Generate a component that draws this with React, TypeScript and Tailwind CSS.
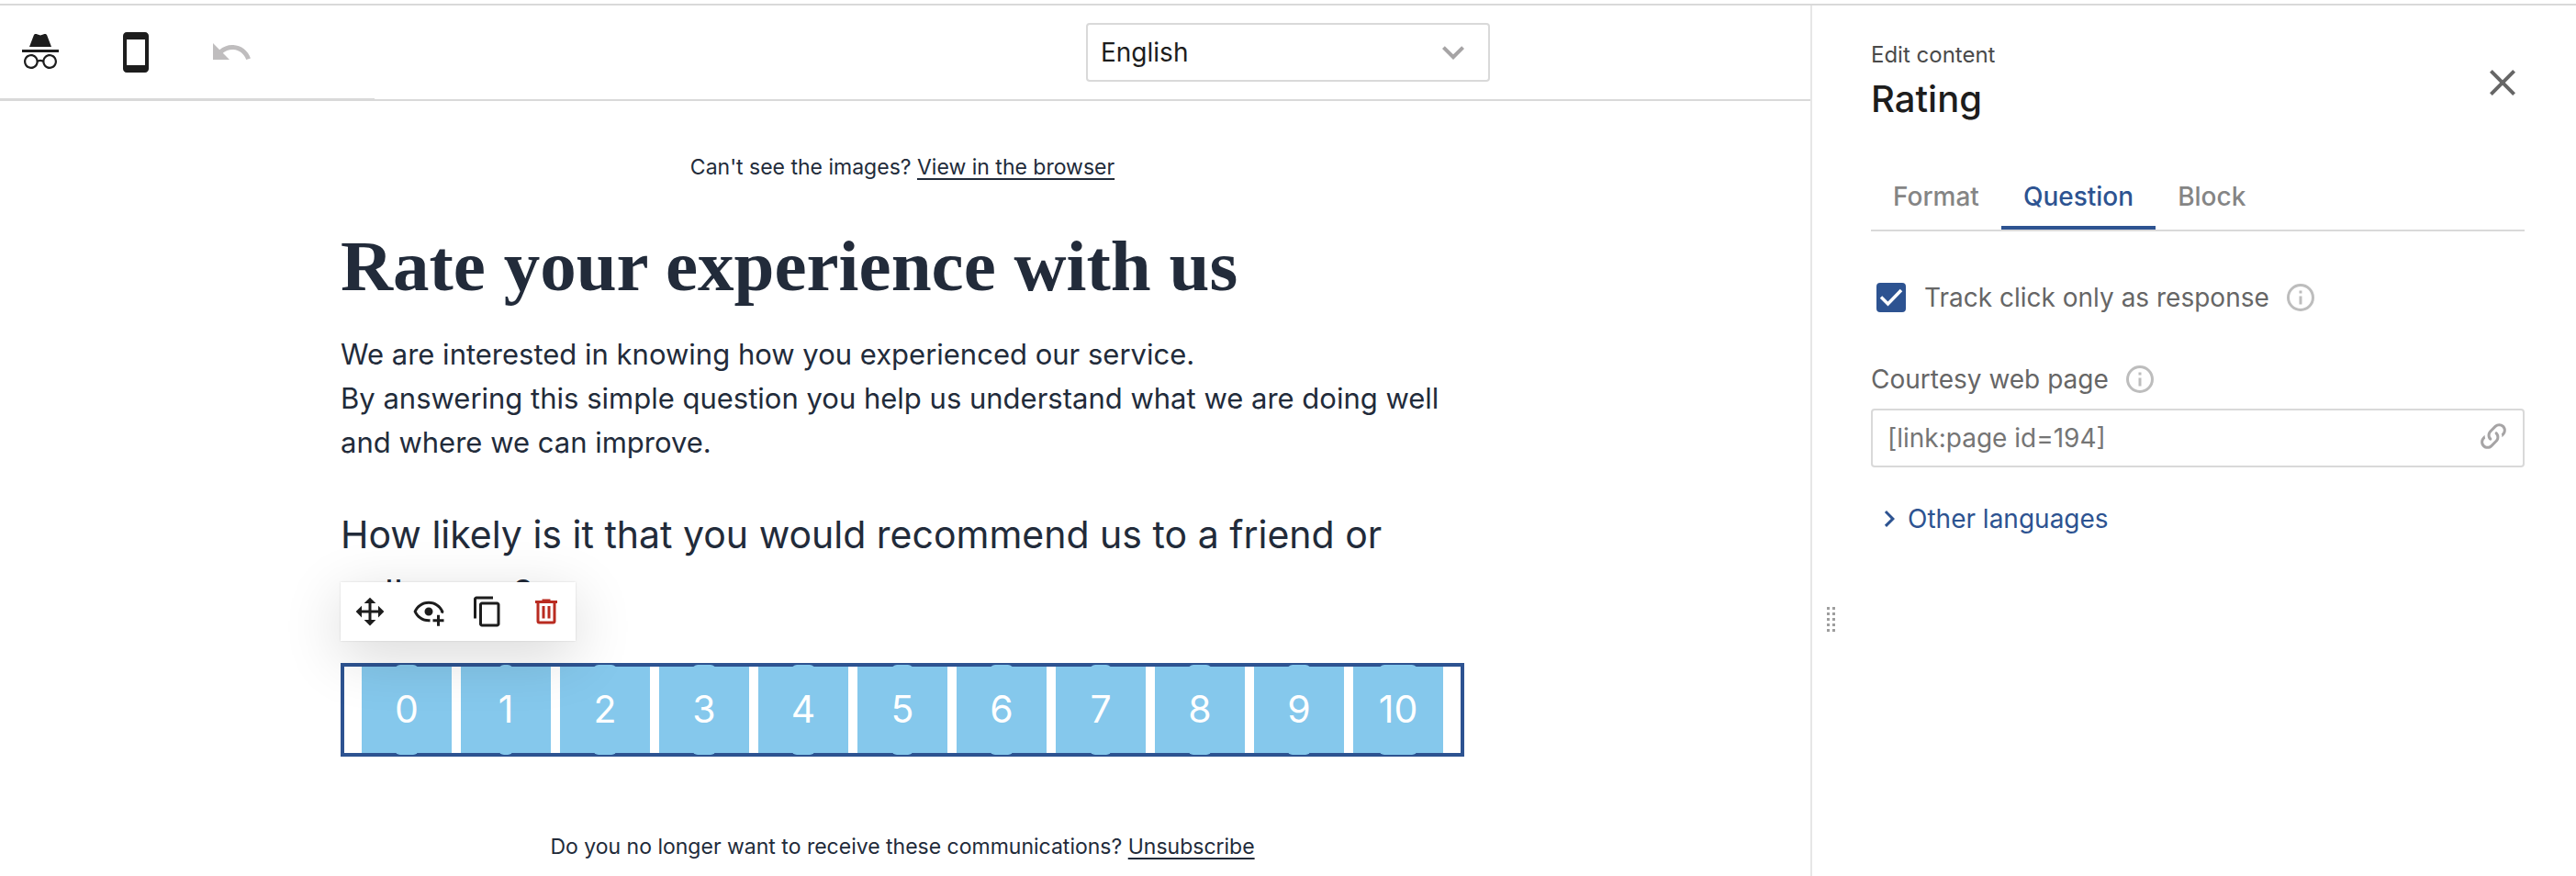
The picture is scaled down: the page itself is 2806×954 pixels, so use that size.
import React, { useState } from 'react';
import { MdClose, MdContentCopy, MdStayPrimaryPortrait, MdUndo } from 'react-icons/md';

const PATHS = {
  incognito: 'M17.06 13C15.2 13 13.64 14.33 13.24 16.1C12.29 15.69 11.42 15.8 10.76 16.09C10.35 14.31 8.79 13 6.94 13C4.77 13 3 14.79 3 17C3 19.21 4.77 21 6.94 21C9 21 10.68 19.38 10.84 17.32C11.18 17.08 12.07 16.63 13.16 17.34C13.34 19.39 15 21 17.06 21C19.23 21 21 19.21 21 17C21 14.79 19.23 13 17.06 13M6.94 19.86C5.38 19.86 4.13 18.58 4.13 17S5.39 14.14 6.94 14.14C8.5 14.14 9.75 15.42 9.75 17S8.5 19.86 6.94 19.86M17.06 19.86C15.5 19.86 14.25 18.58 14.25 17S15.5 14.14 17.06 14.14C18.62 14.14 19.88 15.42 19.88 17S18.61 19.86 17.06 19.86M22 10.5H2V12H22V10.5M15.53 2.63C15.31 2.14 14.75 1.88 14.22 2.05L12 2.79L9.77 2.05L9.72 2.04C9.19 1.89 8.63 2.17 8.43 2.68L6 9H18L15.56 2.68L15.53 2.63Z',
  move: 'M13,6V11H18V7.75L22.25,12L18,16.25V13H13V18H16.25L12,22.25L7.75,18H11V13H6V16.25L1.75,12L6,7.75V11H11V6H7.75L12,1.75L16.25,6H13Z',
  eyePlus: 'M12,4.5C7,4.5 2.73,7.61 1,12C2.73,16.39 7,19.5 12,19.5C12.36,19.5 12.72,19.5 13.08,19.45C13.03,19.13 13,18.82 13,18.5C13,18.14 13.04,17.78 13.1,17.42C12.74,17.46 12.37,17.5 12,17.5C8.24,17.5 4.83,15.36 3.18,12C4.83,8.64 8.24,6.5 12,6.5C15.76,6.5 19.17,8.64 20.82,12C20.7,12.24 20.56,12.45 20.43,12.68C21.09,12.84 21.72,13.11 22.29,13.5C22.56,13 22.8,12.5 23,12C21.27,7.61 17,4.5 12,4.5M12,9A3,3 0 0,0 9,12A3,3 0 0,0 12,15A3,3 0 0,0 15,12A3,3 0 0,0 12,9M18,14.5V17.5H15V19.5H18V22.5H20V19.5H23V17.5H20V14.5H18Z',
  trash: 'M9,3V4H4V6H5V19A2,2 0 0,0 7,21H17A2,2 0 0,0 19,19V6H20V4H15V3H9M7,6H17V19H7V6M9,8V17H11V8H9M13,8V17H15V8H13Z',
  link: 'M10.59,13.41C11,13.8 11,14.44 10.59,14.83C10.2,15.22 9.56,15.22 9.17,14.83C7.22,12.88 7.22,9.71 9.17,7.76V7.76L12.71,4.22C14.66,2.27 17.83,2.27 19.78,4.22C21.73,6.17 21.73,9.34 19.78,11.29L18.29,12.78C18.3,11.96 18.17,11.14 17.89,10.36L18.36,9.88C19.54,8.71 19.54,6.81 18.36,5.64C17.19,4.46 15.29,4.46 14.12,5.64L10.59,9.17C9.41,10.34 9.41,12.24 10.59,13.41M13.41,9.17C13.8,8.78 14.44,8.78 14.83,9.17C16.78,11.12 16.78,14.29 14.83,16.24V16.24L11.29,19.78C9.34,21.73 6.17,21.73 4.22,19.78C2.27,17.83 2.27,14.66 4.22,12.71L5.71,11.22C5.7,12.04 5.83,12.86 6.11,13.65L5.64,14.12C4.46,15.29 4.46,17.19 5.64,18.36C6.81,19.54 8.71,19.54 9.88,18.36L13.41,14.83C14.59,13.66 14.59,11.76 13.41,10.59C13,10.2 13,9.56 13.41,9.17Z',
  chevronDown: 'M7.41,8.58L12,13.17L16.59,8.58L18,10L12,16L6,10L7.41,8.58Z',
  chevronRight: 'M8.59,16.58L13.17,12L8.59,7.41L10,6L16,12L10,18L8.59,16.58Z',
  info: 'M11,9H13V7H11M12,20C7.59,20 4,16.41 4,12C4,7.59 7.59,4 12,4C16.41,4 20,7.59 20,12C20,16.41 16.41,20 12,20M12,2A10,10 0 0,0 2,12A10,10 0 0,0 12,22A10,10 0 0,0 22,12A10,10 0 0,0 12,2M11,17H13V11H11V17Z',
};

interface IconProps {
  name: keyof typeof PATHS;
  className?: string;
}

const Icon: React.FC<IconProps> = ({ name, className }) => (
  <svg viewBox="0 0 24 24" className={className} fill="currentColor" aria-hidden="true">
    <path d={PATHS[name]} />
  </svg>
);

const TopBar: React.FC = () => (
  <header className="flex h-[104px] items-center border-b-2 border-[#d9d9d9] text-[#1d1d1d]">
    <div className="flex h-full w-[408px] items-center gap-14 border-b border-[#d9d9d9] pl-5">
      <button type="button" aria-label="Preview"><Icon name="incognito" className="size-12" /></button>
      <button type="button" aria-label="Mobile view"><MdStayPrimaryPortrait className="size-12" /></button>
      <button type="button" aria-label="Undo" className="text-[#bfbdbe]"><MdUndo className="size-12" /></button>
    </div>
    <div className="relative mr-[349px] ml-auto w-[440px]">
      <select
        aria-label="Language"
        defaultValue="English"
        className="h-16 w-full appearance-none rounded-sm border-2 border-[#d9d9d9] bg-white px-3.5 text-[28px]"
      >
        <option>English</option>
      </select>
      <Icon name="chevronDown" className="pointer-events-none absolute top-2 right-4 size-12 text-[#a6a4a5]" />
    </div>
  </header>
);

const BlockActions: React.FC = () => {
  const actions = [
    { label: 'Move', icon: <Icon name="move" className="size-9" />, color: 'text-[#1d1d1d]' },
    { label: 'Visibility', icon: <Icon name="eyePlus" className="size-9" />, color: 'text-[#1d1d1d]' },
    { label: 'Duplicate', icon: <MdContentCopy className="size-9" />, color: 'text-[#1d1d1d]' },
    { label: 'Delete', icon: <Icon name="trash" className="size-9" />, color: 'text-[#b92b20]' },
  ];

  return (
    <div className="absolute bottom-full -left-1 mb-7 flex bg-white shadow-[0_0_2px_rgba(0,0,0,0.15),0_16px_64px_rgba(0,0,0,0.16)]">
      {actions.map((action) => (
        <button key={action.label} type="button" aria-label={action.label} className={`flex size-16 items-center justify-center ${action.color}`}>
          {action.icon}
        </button>
      ))}
    </div>
  );
};

const RatingBlock: React.FC = () => (
  <div className="relative mt-11 border-4 border-[#2d5391] px-[19px]">
    <div className="flex gap-2.5">
      {[0, 1, 2, 3, 4, 5, 6, 7, 8, 9, 10].map((n) => (
        <a key={n} href="#" className="flex h-[94px] flex-1 items-center justify-center bg-[#85c8ec] text-[41px] text-white">
          {/* the inline link box pokes over the selection frame */}
          <span className="flex h-[98px] shrink-0 items-center rounded-md bg-[#85c8ec]">{n}</span>
        </a>
      ))}
    </div>
    <BlockActions />
  </div>
);

const EmailCanvas: React.FC = () => (
  <main className="pr-1.5 text-[#222b3a]">
    <div className="mx-auto max-w-[1224px]">
      <p className="mt-14 text-center text-[23px] leading-8">
        Can't see the images? <a href="#" className="underline decoration-2 underline-offset-4">View in the browser</a>
      </p>
      <h1 className="mt-11 font-['Liberation_Serif',serif] text-[79px] leading-[96px] font-bold">Rate your experience with us</h1>
      <p className="mt-6 text-[31px] leading-[48px]">
        We are interested in knowing how you experienced our service.
        <br />
        By answering this simple question you help us understand what we are doing well and where we can improve.
      </p>
      <p className="mt-11 text-[41px] leading-[64px]">
        How likely is it that you would recommend us to a friend or colleague?
      </p>
      <RatingBlock />
      <p className="mt-[82px] text-center text-[23px] leading-8">
        Do you no longer want to receive these communications? <a href="#" className="underline decoration-2 underline-offset-4">Unsubscribe</a>
      </p>
    </div>
  </main>
);

const EditPanel: React.FC = () => {
  const [tab, setTab] = useState('Question');
  const [trackOnly, setTrackOnly] = useState(true);
  const [page, setPage] = useState('[link:page id=194]');

  return (
    <aside className="flex w-[834px] shrink-0 border-l-2 border-[#e6e6e6]">
      <div className="flex w-16 flex-col items-start pt-[655px] pl-4">
        <svg viewBox="0 0 10 27" className="h-[27px] w-2.5" fill="#9e9e9e" aria-hidden="true">
          {[0, 6, 12, 18, 24].map((y) => (
            <path key={y} d={`M0 ${y}h3v3h-3zM6 ${y}h3v3h-3z`} />
          ))}
        </svg>
      </div>

      <div className="flex-1 pr-14 text-[28px] leading-9 text-[#666]">
        <div className="mt-[38px] flex items-center justify-between">
          <div>
            <p className="text-[24px] leading-8 text-[#4a4a4a]">Edit content</p>
            <h2 className="mt-1 text-[40px] leading-[56px] font-medium text-[#1d1d1d]">Rating</h2>
          </div>
          <button type="button" aria-label="Close"><MdClose className="size-12" /></button>
        </div>

        <div className="mt-[46px] flex border-b-2 border-[#d9d9d9]">
          {['Format', 'Question', 'Block'].map((name) => (
            <button
              key={name}
              type="button"
              onClick={() => setTab(name)}
              className={`h-[68px] border-b-4 px-6 font-medium ${
                tab === name ? 'border-[#2d5391] text-[#2d5391]' : 'border-transparent text-[#858585]'
              }`}
            >
              {name}
            </button>
          ))}
        </div>

        <div className="mt-[54px] flex items-center">
          <label className="flex items-center gap-5">
            <span className="relative ml-1.5 flex size-8">
              <input
                type="checkbox"
                checked={trackOnly}
                onChange={(e) => setTrackOnly(e.target.checked)}
                className="size-8 appearance-none rounded-sm border-2 border-[#2d5391] checked:bg-[#2d5391]"
              />
              {trackOnly && (
                <svg viewBox="0 0 32 32" className="pointer-events-none absolute inset-0 size-8 text-white" fill="none" stroke="currentColor">
                  <path strokeWidth={3.5} d="M5 15.500l7.500 7.500L27 8" />
                </svg>
              )}
            </span>
            Track click only as response
          </label>
          <Icon name="info" className="ml-4 size-9 text-[#bdbdbd]" />
        </div>

        <div className="mt-[53px] flex items-center">
          <label htmlFor="courtesy-page">Courtesy web page</label>
          <Icon name="info" className="ml-4 size-9 text-[#bdbdbd]" />
        </div>
        <div className="relative mt-3.5">
          <input
            id="courtesy-page"
            type="text"
            value={page}
            onChange={(e) => setPage(e.target.value)}
            className="h-16 w-full rounded-sm border-2 border-[#d9d9d9] pr-16 pl-4 text-[#757575]"
          />
          <Icon name="link" className="absolute top-3 right-4 size-9 text-[#a6a4a5]" />
        </div>

        <button type="button" className="mt-[38px] ml-0.5 flex items-center gap-0.5 text-[#2d5391]">
          <Icon name="chevronRight" className="size-9" />
          Other languages
        </button>
      </div>
    </aside>
  );
};

const App: React.FC = () => (
  <div className="min-h-screen bg-white pt-1 font-['Inter',sans-serif]">
    <div className="flex min-h-[calc(100vh-4px)] border-t-2 border-[#d9d9d9]">
      <div className="min-w-0 flex-1">
        <TopBar />
        <EmailCanvas />
      </div>
      <EditPanel />
    </div>
  </div>
);

export default App;
